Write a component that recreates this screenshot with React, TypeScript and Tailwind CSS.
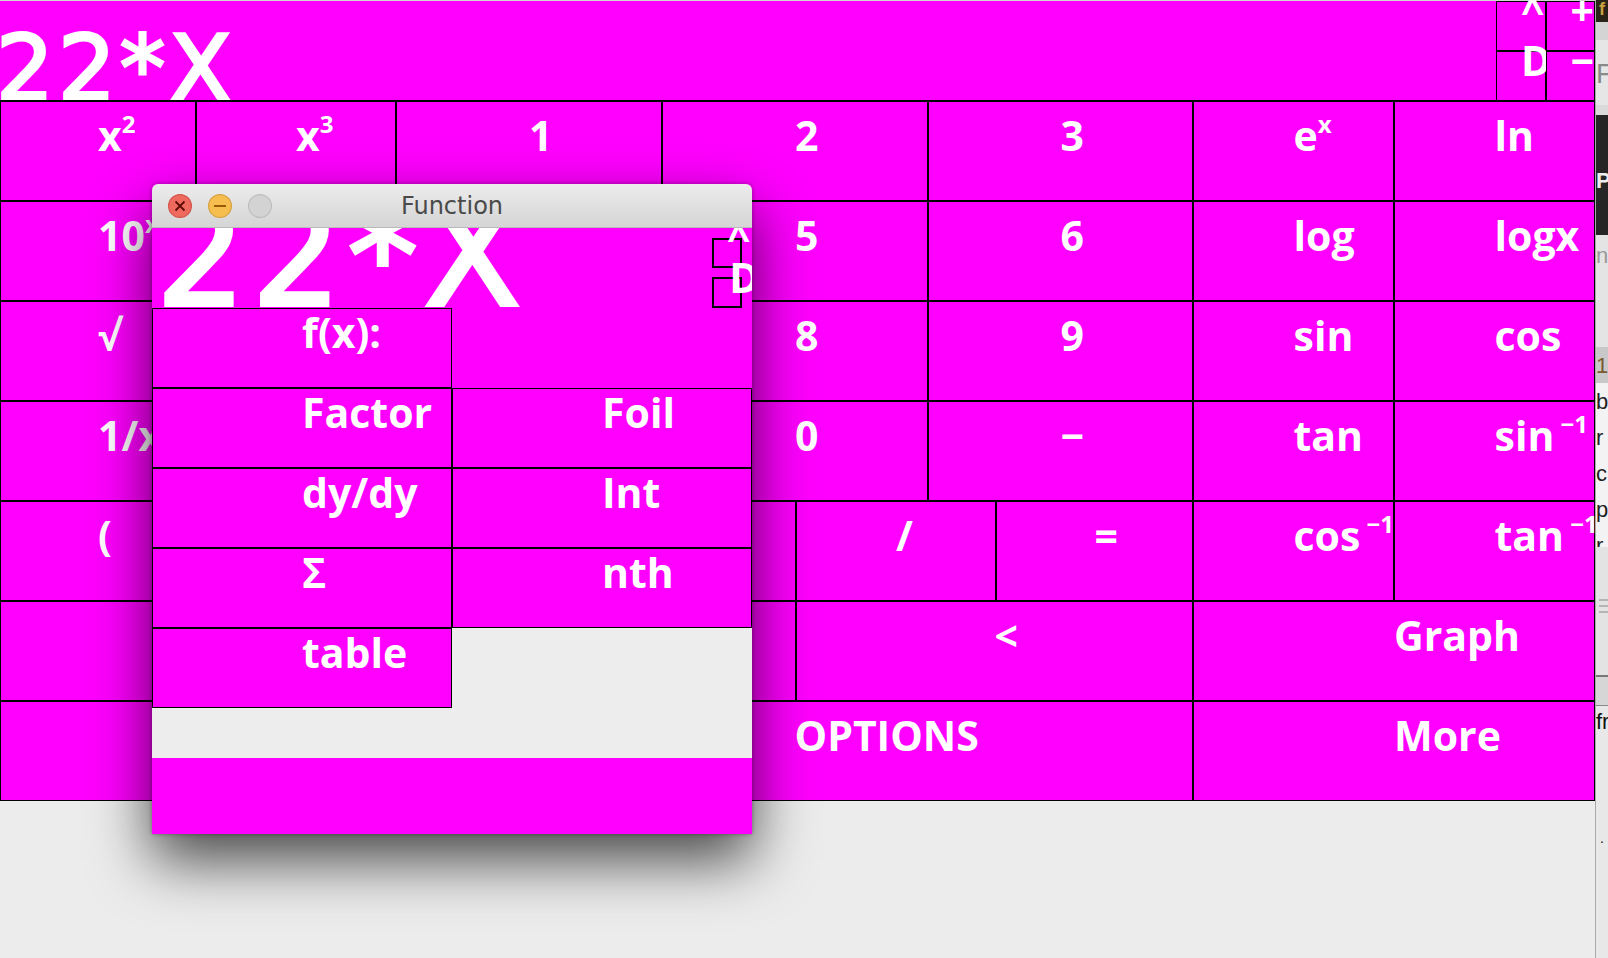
import React from "react";

type KeyProps = {
  children?: React.ReactNode;
  className?: string;
};

// Java-style button: the label starts at the button's centre, its baseline on the middle line
function Key({ children, className = "" }: KeyProps) {
  return (
    <div className={`grid grid-rows-2 border border-black bg-[#ff00ff] ${className}`}>
      <div className="flex items-end pl-[50%]">
        <span className="-mb-[5px] whitespace-nowrap font-['Open_Sans',sans-serif] text-[41px] font-bold leading-none text-white">
          {children}
        </span>
      </div>
      <div />
    </div>
  );
}

const Sup = ({ children }: { children: React.ReactNode }) => (
  <span className="align-[18px] text-[24px]">{children}</span>
);

function TrafficLights() {
  return (
    <div className="flex items-center gap-[16px] pl-[16px]">
      <svg width="24" height="24" viewBox="0 0 24 24">
        <circle cx="12" cy="12" r="11.4" fill="#ee6a5f" stroke="#d4534a" strokeWidth="1.2" />
        <path d="M7.5 7.5 L16.5 16.5 M16.5 7.5 L7.5 16.5" stroke="#5e0b08" strokeWidth="1.8" />
      </svg>
      <svg width="24" height="24" viewBox="0 0 24 24">
        <circle cx="12" cy="12" r="11.4" fill="#f6be4f" stroke="#d8a240" strokeWidth="1.2" />
        <path d="M6 12 H18" stroke="#9a5a07" strokeWidth="2" />
      </svg>
      <svg width="24" height="24" viewBox="0 0 24 24">
        <circle cx="12" cy="12" r="11.4" fill="#d3d3d3" stroke="#bdbdbd" strokeWidth="1.2" />
      </svg>
    </div>
  );
}

function FunctionWindow() {
  return (
    <div className="absolute left-[152px] top-[184px] w-[600px] overflow-hidden rounded-t-[6px] shadow-[0_26px_60px_rgba(0,0,0,0.7),0_0_4px_rgba(0,0,0,0.35)]">
      <div className="grid h-[44px] grid-cols-[1fr_auto_1fr] items-center border-b border-[#b9b9b9] bg-gradient-to-b from-[#ececec] to-[#d5d5d5]">
        <TrafficLights />
        <span className="font-['DejaVu_Sans',sans-serif] text-[24px] text-[#4a4a4a]">Function</span>
        <div />
      </div>

      <div className="bg-[#ff00ff]">
        <div className="flex h-[80px] overflow-hidden">
          <div className="flex-1 pl-[4px]">
            <span className="-mt-[42px] block whitespace-nowrap font-['DejaVu_Sans',sans-serif] text-[141px] leading-none tracking-[6px] text-white [-webkit-text-stroke:4px_white]">
              22*X
            </span>
          </div>
          <div className="mr-[10px] mt-[10px] flex w-[30px] flex-col gap-[9px]">
            <Key className="h-[30px] border-2">^</Key>
            <Key className="h-[31px] border-2">D</Key>
          </div>
        </div>

        <div className="grid grid-cols-2 grid-rows-[repeat(5,80px)]">
          <Key>f(x):</Key>
          <div />
          <Key>Factor</Key>
          <Key>Foil</Key>
          <Key>dy/dy</Key>
          <Key>Int</Key>
          <Key>Σ</Key>
          <Key>nth</Key>
          <Key>table</Key>
          <div className="bg-[#ededed]" />
        </div>
        <div className="h-[50px] bg-[#ededed]" />
        <div className="h-[76px]" />
      </div>
    </div>
  );
}

function SideStrip() {
  return (
    <div className="flex w-[13px] flex-col overflow-hidden border-l border-[#a9a9a9] font-['Liberation_Sans',sans-serif] leading-none">
      <div className="h-[22px] bg-[#2a2418] pl-[3px] text-[18px] font-bold text-[#c9a040]">f</div>
      <div className="h-[18px] bg-[#d4d4d4]" />
      <div className="h-[65px] bg-[#e6e6e6] pt-[20px] text-[28px] text-[#8a8a8a]">F</div>
      <div className="h-[10px] bg-[#dadada]" />
      <div className="h-[120px] bg-[#262626] pt-[55px] text-[22px] font-bold text-[#eeeeee]">P</div>
      <div className="h-[112px] bg-[#e4e4e4] pt-[10px] text-[22px] text-[#9a9a9a]">n</div>
      <div className="h-[36px] bg-[#c8c8c8] pt-[8px] text-[22px] text-[#7a5a30]">1</div>
      <div className="flex h-[164px] flex-col gap-[14px] bg-[#f3f3f3] pt-[8px] text-[22px] text-[#222]">
        <span>b</span>
        <span>r</span>
        <span>c</span>
        <span>p</span>
        <span>r</span>
      </div>
      <div className="flex h-[128px] flex-col gap-[4px] bg-[#e3e3e3] pl-[3px] pt-[52px]">
        <div className="h-[2px] bg-[#b5b5b5]" />
        <div className="h-[2px] bg-[#b5b5b5]" />
        <div className="h-[2px] bg-[#b5b5b5]" />
      </div>
      <div className="h-[30px] border-t-2 border-[#777] bg-[#d6d6d6]" />
      <div className="flex-1 border-t border-[#8a8a8a] bg-[#e8e8e8] pt-[5px] text-[22px] text-[#111]">
        fr
        <div className="pl-[4px] pt-[98px] text-[14px]">.</div>
      </div>
    </div>
  );
}

export default function App() {
  return (
    <div className="relative flex h-[958px] w-[1608px] overflow-hidden bg-[#ececec]">
      <div className="flex w-[1595px] flex-col">
        <div className="h-px bg-[#d4d4d4]" />
        <div className="flex h-[100px]">
          <div className="flex-1 overflow-hidden border-b border-black bg-[#ff00ff]">
            <span className="-ml-[4px] mt-[22px] block whitespace-nowrap font-['DejaVu_Sans',sans-serif] text-[91px] leading-none tracking-[4px] text-white [-webkit-text-stroke:3px_white]">
              22*X
            </span>
          </div>
          <div className="grid grid-cols-[50px_49px] grid-rows-2">
            <Key>^</Key>
            <Key>+</Key>
            <Key>D</Key>
            <Key>−</Key>
          </div>
        </div>

        <div className="grid grid-cols-[196px_200px_266px_134px_132px_68px_197px_201px_201px] grid-rows-[repeat(7,100px)]">
          <Key>x<Sup>2</Sup></Key>
          <Key>x<Sup>3</Sup></Key>
          <Key>1</Key>
          <Key className="col-span-2">2</Key>
          <Key className="col-span-2">3</Key>
          <Key>e<Sup>x</Sup></Key>
          <Key>ln</Key>

          <Key>10<Sup>x</Sup></Key>
          <Key>π</Key>
          <Key>4</Key>
          <Key className="col-span-2">5</Key>
          <Key className="col-span-2">6</Key>
          <Key>log</Key>
          <Key>logx</Key>

          <Key>√</Key>
          <Key>x!</Key>
          <Key>7</Key>
          <Key className="col-span-2">8</Key>
          <Key className="col-span-2">9</Key>
          <Key>sin</Key>
          <Key>cos</Key>

          <Key>1/x</Key>
          <Key>|x|</Key>
          <Key>+</Key>
          <Key className="col-span-2">0</Key>
          <Key className="col-span-2">−</Key>
          <Key>tan</Key>
          <Key>sin<Sup> −1</Sup></Key>

          <Key>(</Key>
          <Key>)</Key>
          <Key className="col-span-2">*</Key>
          <Key className="col-span-2">/</Key>
          <Key>=</Key>
          <Key>cos<Sup> −1</Sup></Key>
          <Key>tan<Sup> −1</Sup></Key>

          <Key className="col-span-2">.</Key>
          <Key className="col-span-2">C</Key>
          <Key className="col-span-3">&lt;</Key>
          <Key className="col-span-2">Graph</Key>

          <Key className="col-span-2" />
          <Key className="col-span-5">OPTIONS</Key>
          <Key className="col-span-2">More</Key>
        </div>
      </div>

      <SideStrip />
      <FunctionWindow />
    </div>
  );
}
